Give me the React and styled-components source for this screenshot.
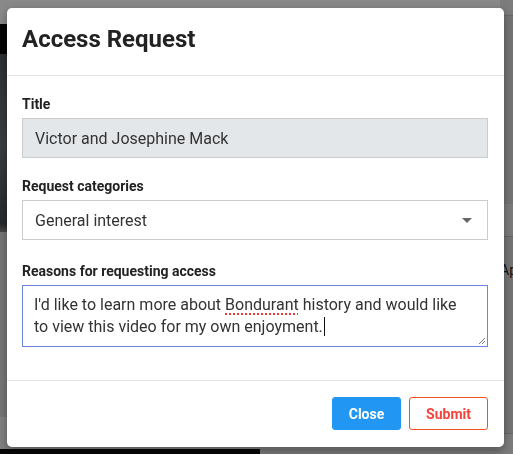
import React from "react";
import styled, { createGlobalStyle } from "styled-components";

const GlobalStyle = createGlobalStyle`
  html, body {
    margin: 0;
    padding: 0;
    height: 100%;
    overflow: hidden;
  }
  body {
    font-family: Roboto, "Liberation Sans", Arial, sans-serif;
    background: #777;
  }
`;

/* the page behind the dimmed backdrop */
const Page = styled.div`
  display: grid;
  grid-template-columns: 505px 1fr;
  height: 454px;
  background: #777;
`;

const MainCol = styled.div`
  display: flex;
  flex-direction: column;
`;

const TopStrip = styled.div`
  height: 24px;
  background: #898989;
`;

const Hero = styled.div`
  height: 208px;
  background: linear-gradient(180deg, #050505 0 30px, #2c3033 30px, #3a3e40 120px, #26292b 200px, #4a4a4a 208px);
`;

const Filler = styled.div`
  flex: 1;
  background: #767676;
`;

const FooterBand = styled.div`
  height: 32px;
  background: #808080;
`;

const BlackBar = styled.div`
  height: 7px;
  width: 260px;
  background: #060606;
`;

const SideCol = styled.div`
  display: flex;
  flex-direction: column;
  border-left: 1px solid #6a6a6a;
  background: #747474;
`;

const SideBand = styled.div`
  height: ${(p) => p.$h}px;
  background: ${(p) => p.$bg || "#747474"};
  border-bottom: ${(p) => (p.$line ? "1px solid #676767" : "none")};
  display: flex;
  align-items: center;
  font-size: 14px;
  color: #111;
  margin-left: -6px;
  overflow: hidden;
`;

/* the dialog */
const Dialog = styled.div`
  position: fixed;
  top: 8px;
  left: 7px;
  width: 497px;
  height: 439px;
  background: #fff;
  border-radius: 5px;
  box-shadow: 0 3px 9px rgba(0, 0, 0, 0.35);
  display: flex;
  flex-direction: column;
  overflow: hidden;
`;

const Header = styled.div`
  height: 68px;
  box-sizing: border-box;
  padding: 0 15px 6px;
  display: flex;
  align-items: center;
  border-bottom: 1px solid #e5e5e5;
`;

const Heading = styled.h4`
  margin: 0;
  font-size: 24px;
  font-weight: 700;
  color: #222;
`;

const Body = styled.div`
  padding: 18px 15px 33px;
  border-bottom: 1px solid #e5e5e5;
`;

const Group = styled.div`
  margin-top: ${(p) => p.$gap || 0}px;
`;

const Label = styled.label`
  display: block;
  font-size: 14px;
  line-height: 20px;
  font-weight: 700;
  color: #222;
  margin-bottom: 4px;
`;

const Field = styled.div`
  box-sizing: border-box;
  height: 40px;
  width: 466px;
  border: 1px solid #ccc;
  background: ${(p) => (p.$readOnly ? "#e4e7ea" : "#fff")};
  padding: 0 12px;
  display: flex;
  align-items: center;
  justify-content: space-between;
  font-size: 16px;
  color: #333;
`;

const Caret = styled.span`
  width: 0;
  height: 0;
  border-left: 5px solid transparent;
  border-right: 5px solid transparent;
  border-top: 5px solid #666;
  margin-right: 3px;
`;

const TextBox = styled.div`
  position: relative;
  box-sizing: border-box;
  width: 466px;
  height: 62px;
  border: 1px solid #6a84e0;
  padding: 8px 11px;
  font-size: 16px;
  line-height: 22px;
  color: #333;
`;

const Misspelt = styled.span`
  text-decoration: underline dotted #e53935;
  text-underline-offset: 3px;
  text-decoration-thickness: 1.5px;
`;

const Cursor = styled.span`
  display: inline-block;
  width: 1px;
  height: 19px;
  background: #111;
  vertical-align: -4px;
  margin-left: 1px;
`;

const Grip = styled.svg`
  position: absolute;
  right: 1px;
  bottom: 1px;
`;

const Footer = styled.div`
  flex: 1;
  padding: 16px 16px 0;
  display: flex;
  justify-content: flex-end;
  align-items: flex-start;
  gap: 8px;
`;

const Button = styled.button`
  box-sizing: border-box;
  height: 33px;
  min-width: ${(p) => p.$w}px;
  border-radius: 3px;
  font-family: inherit;
  font-size: 14px;
  font-weight: 700;
  cursor: pointer;
  border: 1px solid ${(p) => (p.$primary ? "#2196f3" : "#f4511e")};
  background: ${(p) => (p.$primary ? "#2196f3" : "#fff")};
  color: ${(p) => (p.$primary ? "#fff" : "#f4433a")};
`;

const App = () => {
  return (
    <>
      <GlobalStyle />
      <Page>
        <MainCol>
          <TopStrip />
          <Hero />
          <Filler />
          <FooterBand />
          <BlackBar />
        </MainCol>
        <SideCol>
          <SideBand $h={15} $bg="#7c7c7c" $line />
          <SideBand $h={188} />
          <SideBand $h={32} $bg="#7b7b7b" $line />
          <SideBand $h={66}>Ap</SideBand>
          <SideBand $h={130} $line />
          <SideBand $h={22} $bg="#7c7c7c" />
        </SideCol>
      </Page>

      <Dialog>
        <Header>
          <Heading>Access Request</Heading>
        </Header>
        <Body>
          <Group>
            <Label>Title</Label>
            <Field $readOnly>Victor and Josephine Mack</Field>
          </Group>
          <Group $gap={18}>
            <Label>Request categories</Label>
            <Field>
              General interest
              <Caret />
            </Field>
          </Group>
          <Group $gap={21}>
            <Label>Reasons for requesting access</Label>
            <TextBox>
              I'd like to learn more about <Misspelt>Bondurant</Misspelt> history and would like
              <br />
              to view this video for my own enjoyment.
              <Cursor />
              <Grip width="8" height="8" viewBox="0 0 8 8">
                <path d="M7 1 L1 7 M7 4 L4 7" stroke="#777" strokeWidth="1" />
              </Grip>
            </TextBox>
          </Group>
        </Body>
        <Footer>
          <Button $primary $w={69}>Close</Button>
          <Button $w={79}>Submit</Button>
        </Footer>
      </Dialog>
    </>
  );
};

export default App;
